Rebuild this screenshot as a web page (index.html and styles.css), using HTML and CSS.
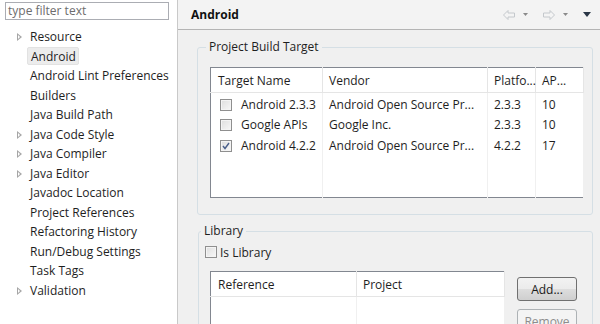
FILE: index.html
```html
<!DOCTYPE html>
<html>
<head>
<meta charset="utf-8">
<link rel="stylesheet" href="styles.css">
</head>
<body>
<div class="sidebar">
  <div class="filter">type filter text</div>
  <ul class="tree">
    <li class="node"><span class="tw"></span>Resource</li>
    <li><span class="sel">Android</span></li>
    <li>Android Lint Preferences</li>
    <li>Builders</li>
    <li>Java Build Path</li>
    <li class="node"><span class="tw"></span>Java Code Style</li>
    <li class="node"><span class="tw"></span>Java Compiler</li>
    <li class="node"><span class="tw"></span>Java Editor</li>
    <li>Javadoc Location</li>
    <li>Project References</li>
    <li>Refactoring History</li>
    <li>Run/Debug Settings</li>
    <li>Task Tags</li>
    <li class="node"><span class="tw"></span>Validation</li>
  </ul>
</div>
<div class="main">
  <div class="header">
    <span class="title">Android</span>
    <div class="tools">
      <svg width="12" height="10" viewBox="0 0 12 10"><path d="M0.5 5 L5 0.5 V3 H11.5 V7 H5 V9.5 Z" fill="#f4f4f4" stroke="#c4c8cc" stroke-width="1"/></svg>
      <svg class="dd" width="5" height="3" viewBox="0 0 5 3"><path d="M0 0 H5 L2.5 3 Z" fill="#8a8a8a"/></svg>
      <svg class="fwd" width="12" height="10" viewBox="0 0 12 10"><path d="M11.5 5 L7 0.5 V3 H0.5 V7 H7 V9.5 Z" fill="#f4f4f4" stroke="#c4c8cc" stroke-width="1"/></svg>
      <svg class="dd" width="5" height="3" viewBox="0 0 5 3"><path d="M0 0 H5 L2.5 3 Z" fill="#8a8a8a"/></svg>
      <svg class="menu" width="8" height="5" viewBox="0 0 8 5"><path d="M0 0 H8 L4 5 Z" fill="#2a3646"/></svg>
    </div>
  </div>
  <fieldset class="group g1">
    <legend>Project Build Target</legend>
    <table class="grid targets">
      <colgroup><col class="c1"><col class="c2"><col class="c3"><col class="c4"></colgroup>
      <thead>
        <tr><th>Target Name</th><th>Vendor</th><th>Platfo...</th><th>AP...</th></tr>
      </thead>
      <tbody>
        <tr><td><span class="cb"></span>Android 2.3.3</td><td>Android Open Source Pr...</td><td>2.3.3</td><td>10</td></tr>
        <tr><td><span class="cb"></span>Google APIs</td><td>Google Inc.</td><td>2.3.3</td><td>10</td></tr>
        <tr><td><span class="cb on"><svg width="8" height="8" viewBox="0 0 8 8"><path d="M1 4 L3 6.5 L7 1" fill="none" stroke="#4a5f8a" stroke-width="1.4"/></svg></span>Android 4.2.2</td><td>Android Open Source Pr...</td><td>4.2.2</td><td>17</td></tr>
        <tr class="filler"><td></td><td></td><td></td><td></td></tr>
      </tbody>
    </table>
  </fieldset>
  <fieldset class="group g2">
    <legend>Library</legend>
    <label class="islib"><span class="cb"></span>Is Library</label>
    <div class="libarea">
      <table class="grid libs">
        <colgroup><col class="r1"><col class="r2"></colgroup>
        <thead><tr><th>Reference</th><th>Project</th></tr></thead>
        <tbody><tr class="filler"><td></td><td></td></tr></tbody>
      </table>
      <div class="buttons">
        <button class="btn">Add...</button>
        <button class="btn" disabled>Remove</button>
      </div>
    </div>
  </fieldset>
</div>
</body>
</html>
```
FILE: styles.css
```css
* { box-sizing: border-box; }
html, body { margin: 0; padding: 0; }
body {
  width: 600px;
  height: 324px;
  overflow: hidden;
  display: flex;
  font-family: "Open Sans", "Noto Sans", sans-serif;
  font-size: 12px;
  color: #1e1e1e;
}
.sidebar {
  width: 178px;
  flex: none;
  background: #ffffff;
  border-right: 1px solid #c9c9c9;
  padding-top: 2px;
}
.filter {
  margin-left: 5px;
  width: 164px;
  height: 18px;
  border: 1px solid #abadb3;
  color: #6d6d6d;
  padding-left: 2px;
  line-height: 16px;
}
.tree {
  list-style: none;
  margin: 7px 0 0 0;
  padding: 0;
}
.tree li {
  height: 19.5px;
  line-height: 19.5px;
  padding-left: 30px;
  position: relative;
  white-space: nowrap;
}
.tw {
  position: absolute;
  left: 17px;
  top: 6px;
  width: 0;
  height: 0;
  border-top: 4px solid transparent;
  border-bottom: 4px solid transparent;
  border-left: 5px solid #a6a6a6;
}
.tw::after {
  content: "";
  position: absolute;
  left: -4px;
  top: -2px;
  border-top: 2px solid transparent;
  border-bottom: 2px solid transparent;
  border-left: 2px solid #ffffff;
}
.sel {
  display: inline-block;
  margin-left: -3px;
  padding: 0 2px 0 3px;
  height: 18px;
  line-height: 18px;
  background: #ececec;
  border: 1px solid #e2e2e2;
  border-radius: 2px;
}
.main {
  flex: 1;
  background: #f0f0f0;
  display: flex;
  flex-direction: column;
  overflow: hidden;
}
.header {
  height: 30px;
  flex: none;
  border-bottom: 1px solid #b4b4b4;
  background: #f3f3f3;
  display: flex;
  align-items: center;
  padding-left: 13px;
  padding-right: 9px;
}
.title {
  font-weight: bold;
  font-size: 12px;
  color: #111;
}
.tools {
  margin-left: auto;
  display: flex;
  align-items: center;
}
.tools .dd { margin-left: 8px; }
.tools .fwd { margin-left: 15px; }
.tools .menu { margin-left: 15px; }
.group {
  margin: 11px 7px 0 19px;
  border: 1px solid #d5dfe5;
  border-radius: 3px;
  padding: 0 0 0 12px;
  flex: none;
}
.group legend {
  padding: 0 3px;
  margin-left: -4px;
  line-height: 12px;
  color: #1e1e1e;
}
.g1 { height: 174px; padding-top: 14px; }
.g2 { margin-top: 10px; margin-left: 20px; padding-left: 6px; height: 120px; }
.grid {
  border-collapse: collapse;
  background: #ffffff;
  border: 1px solid #828790;
  table-layout: fixed;
}
.grid th {
  font-weight: normal;
  text-align: left;
  height: 25px;
  padding: 0 0 0 6px;
  border-right: 1px solid #e5e5e5;
  border-bottom: 1px solid #e5e5e5;
  white-space: nowrap;
}
.grid td {
  height: 21px;
  padding: 0 0 0 6px;
  border-right: 1px solid #f0f0f0;
  white-space: nowrap;
}
.targets { width: 373px; }
.targets .c1 { width: 112px; }
.targets .c2 { width: 165px; }
.targets .c3 { width: 48px; }
.targets .c4 { width: 48px; }
.targets th:first-child { padding-left: 7px; }
.targets td:first-child { padding-left: 9px; }
.targets tbody tr:first-child td { padding-top: 2px; }
.targets .filler td { height: 42px; }
.cb {
  display: inline-block;
  width: 12px;
  height: 12px;
  vertical-align: -2px;
  margin-right: 9px;
  border: 1px solid #8f8f8f;
  background: linear-gradient(135deg, #dedede, #f8f8f8);
  box-shadow: inset 0 0 0 1px #f4f4f4;
  position: relative;
}
.cb svg { position: absolute; left: 1px; top: 1px; }
.islib {
  display: flex;
  align-items: center;
  margin-top: 7px;
  height: 16px;
}
.islib .cb { margin-right: 3px; }
.libarea {
  display: flex;
  margin-top: 11px;
  margin-left: 5px;
}
.libs { width: 294px; align-self: flex-start; }
.libs .r1 { width: 146px; }
.libs .r2 { width: 148px; }
.libs th:first-child { padding-left: 7px; }
.libs .filler td { height: 40px; }
.buttons {
  margin-left: 12px;
  margin-top: 6px;
  display: flex;
  flex-direction: column;
  gap: 8px;
}
.btn {
  width: 60px;
  height: 24px;
  font-family: inherit;
  font-size: 12px;
  color: #1a1a1a;
  border: 1px solid #707070;
  border-radius: 3px;
  background: linear-gradient(#f2f2f2 0%, #ebebeb 50%, #dddddd 51%, #cfcfcf 100%);
  padding: 0;
}
.btn:disabled {
  color: #8d8d8d;
  border-color: #adb2b5;
  background: #f4f4f4;
}
```
